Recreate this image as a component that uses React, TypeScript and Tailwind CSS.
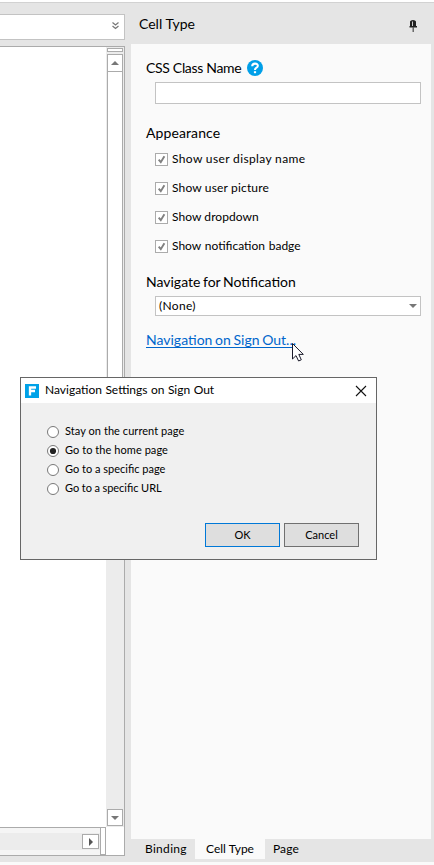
import React from "react";

function Check({ text, cls }: { text: string; cls: string }) {
  return (
    <label className="flex h-[29px] items-center">
      <span className="flex h-[13px] w-[13px] shrink-0 border border-[#ababab] bg-white">
        <svg width="11" height="11" viewBox="0 0 11 11" fill="none" stroke="#808080" strokeWidth="1.9">
          <path d="M2.7 5.6 L4.8 8.2 L8.4 2.2" />
        </svg>
      </span>
      <span className={"-mt-[2px] ml-1 whitespace-nowrap text-[12px] leading-5 " + cls}>{text}</span>
    </label>
  );
}

function Radio({ text, cls, on }: { text: string; cls: string; on?: boolean }) {
  return (
    <label className="flex h-[19px] items-center">
      <svg width="12" height="12" viewBox="0 0 12 12" className="shrink-0">
        <circle cx="6" cy="6" r="5.5" fill="#fff" stroke="#777" />
        {on && <circle cx="6" cy="6" r="3.1" fill="#222" />}
      </svg>
      <span className={"-mt-[2px] ml-[6px] whitespace-nowrap text-[11px] leading-[18px] " + cls}>{text}</span>
    </label>
  );
}

function Editor() {
  return (
    <div className="flex w-[125px] shrink-0 flex-col">
      <div className="mt-[11px] flex h-[26px] shrink-0 items-center justify-end border border-l-0 border-[#c3c3c3] bg-white pr-[5px]">
        <svg className="-mt-[3px]" width="7" height="8" viewBox="0 0 7 8" fill="none" stroke="#777" strokeWidth="1.2">
          <path d="M.5 .5 L3.5 3 L6.5 .5 M.5 4 L3.5 6.5 L6.5 4" />
        </svg>
      </div>
      <div className="mt-[6px] flex h-[810px] shrink-0 flex-col border border-l-0 border-[#ababab] bg-white">
        <div className="flex h-[780px] shrink-0">
          <div className="h-full w-[106px] bg-white" />
          <div className="flex h-full w-[18px] flex-col items-center bg-[#ececec]">
            <div className="mt-[1px] h-[4px] w-[16px] border border-[#ababab] bg-white" />
            <div className="mt-[2px] flex h-[18px] w-[16px] items-center justify-center border border-[#ababab] bg-white">
              <svg width="8" height="4"><path d="M0 4 L4 0 L8 4Z" fill="#777" /></svg>
            </div>
            <div className="h-[420px] w-[16px] border border-t-0 border-[#ababab] bg-white" />
            <div className="grow" />
            <div className="mb-[1px] flex h-[17px] w-[16px] items-center justify-center border border-[#ababab] bg-white">
              <svg width="8" height="4"><path d="M0 0 L4 4 L8 0Z" fill="#777" /></svg>
            </div>
          </div>
        </div>
        <div className="flex h-[28px] w-[106px] border-t border-[#ababab] bg-[#f5f5f5]">
          <div className="mt-[5px] flex h-[17px] w-[100px] items-center justify-end bg-[#ececec] pr-[1px]">
            <div className="flex h-[15px] w-[17px] items-center justify-center border border-[#ababab] bg-white">
              <svg width="4" height="8"><path d="M0 0 L4 4 L0 8Z" fill="#555" /></svg>
            </div>
          </div>
          <div className="-mt-px h-[28px] w-[6px] border border-[#ababab] bg-white" />
        </div>
      </div>
    </div>
  );
}

function Dialog() {
  return (
    <section className="absolute left-[20px] top-[377px] flex h-[183px] w-[357px] flex-col border border-[#666] bg-[#f0f0f0]">
      <div className="flex h-[25px] shrink-0 items-center bg-white pl-1 pr-[9px]">
        <svg width="14" height="14" viewBox="0 0 14 14">
          <rect width="14" height="14" fill="#00a2e8" />
          <path d="M5 11.5 V3.5 H11 M5 7 H10" fill="none" stroke="#fff" strokeWidth="2.3" />
        </svg>
        <span className="-mt-[2px] ml-[6px] grow whitespace-nowrap text-[12px] leading-5 [word-spacing:0.4px]">Navigation Settings on Sign Out</span>
        <svg width="12" height="12" viewBox="0 0 12 12" stroke="#111" strokeWidth="1.1">
          <path d="M1 1 L11 11 M11 1 L1 11" />
        </svg>
      </div>
      <div className="mt-[19px] flex flex-col pl-[26px]">
        <Radio text="Stay on the current page" cls="tracking-[0.06px]" />
        <Radio text="Go to the home page" cls="tracking-[0.06px]" on />
        <Radio text="Go to a specific page" cls="" />
        <Radio text="Go to a specific URL" cls="[word-spacing:-0.3px]" />
      </div>
      <div className="mt-[25px] flex gap-1 pl-[184px] text-[11px]">
        <button className="h-[24px] w-[75px] border border-[#0078d7] bg-[#dedede]">OK</button>
        <button className="h-[24px] w-[75px] border border-[#707070] bg-[#dedede]">Cancel</button>
      </div>
    </section>
  );
}

export default function App() {
  return (
    <div className="relative flex h-[865px] w-[434px] flex-col overflow-hidden bg-[#fafafa] font-['Lato','Noto_Sans',sans-serif] text-black">
      <div className="h-[2px] shrink-0 bg-white" />
      <div className="flex h-[860px] shrink-0 border-t border-[#d2d2d2] bg-[#e5e5e5]">
        <Editor />
        <div className="ml-[6px] flex w-[300px] flex-col">
          <header className="flex h-[41px] shrink-0 items-center justify-between pl-2 pr-[14px]">
            <span className="text-[14px] leading-5">Cell Type</span>
            <svg className="mt-[5px]" width="8" height="12" viewBox="0 0 8 12">
              <path d="M1 1.5 Q1.5 0 4 0 Q6.5 0 7 1.5 V6 H8 V7.5 H.5 V6 H1Z" fill="#222" />
              <path d="M3.5 1.5 V6" stroke="#ccc" />
              <path d="M4.2 7 V12" stroke="#555" strokeWidth="1.3" />
            </svg>
          </header>
          <main className="flex h-[795px] shrink-0 flex-col bg-[#fafafa] pl-[15px] pr-[10px]">
            <div className="mt-[14px] flex h-[20px] items-center">
              <span className="w-[96px] whitespace-nowrap text-[14px] leading-5 tracking-[-0.32px]">CSS Class Name</span>
              <svg className="ml-[5px]" width="16" height="16" viewBox="0 0 16 16">
                <circle cx="8" cy="8" r="8" fill="#009fe8" />
                <path d="M5.2 6.3 Q5.3 3.6 8 3.6 Q10.9 3.6 10.8 6 Q10.7 7.2 9.2 7.9 Q8 8.5 8 10" fill="none" stroke="#fff" strokeWidth="2.1" />
                <path d="M6.9 11.2 H9.1 V13.2 H6.9Z" fill="#fff" />
              </svg>
            </div>
            <div className="ml-[9px] mt-[4px] h-[22px] border border-[#c3c3c3] bg-white" />
            <div className="mt-[19px] h-5 text-[14px] leading-5 tracking-[0.1px]">Appearance</div>
            <div className="ml-[9px] mt-[2px] flex flex-col">
              <Check text="Show user display name" cls="tracking-[0.36px]" />
              <Check text="Show user picture" cls="tracking-[0.16px]" />
              <Check text="Show dropdown" cls="tracking-[0.06px]" />
              <Check text="Show notification badge" cls="[word-spacing:0.7px]" />
            </div>
            <div className="mt-[11px] h-5 text-[14px] leading-5 [word-spacing:-1px]">Navigate for Notification</div>
            <div className="ml-[9px] mt-[4px] flex h-[20px] items-center justify-between border border-[#c3c3c3] bg-white pl-[3px] pr-[3px]">
              <span className="text-[12px] tracking-[0.3px]">(None)</span>
              <svg width="8" height="4"><path d="M0 0 L4 4 L8 0Z" fill="#777" /></svg>
            </div>
            <a className="mt-[15px] h-[17px] self-start whitespace-nowrap border-b border-[#0066cc] text-[14px] leading-[18px] text-[#0066cc] [word-spacing:-0.9px]">Navigation on Sign Out...</a>
          </main>
          <nav className="flex h-[20px] shrink-0 text-[12px] leading-5">
            <span className="w-[64px] pl-[14px] tracking-[0.3px]">Binding</span>
            <span className="w-[70px] bg-[#fafafa] text-center">Cell Type</span>
            <span className="pl-2 tracking-[0.1px]">Page</span>
          </nav>
        </div>
      </div>
      <Dialog />
      <svg className="absolute left-[292px] top-[343px]" width="12" height="19" viewBox="0 0 12 19">
        <path d="M.5 .5 V16 L4 12.6 L6.6 18 L9.3 16.8 L6.8 11.4 H11.3 Z" fill="#fff" stroke="#1a1a2a" />
      </svg>
    </div>
  );
}
